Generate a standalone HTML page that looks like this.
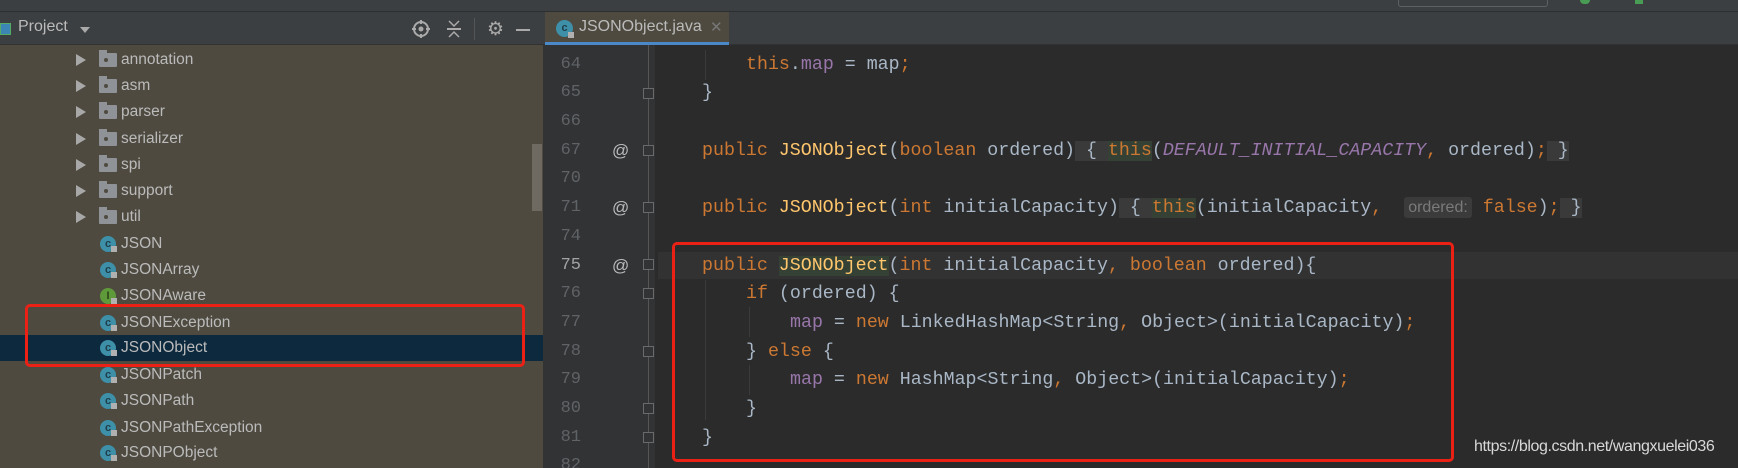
<!DOCTYPE html>
<html style="overflow:hidden"><head><meta charset="utf-8"><style>
*{margin:0;padding:0;box-sizing:border-box}
html,body{overflow:hidden}
body{width:1738px;height:468px;overflow:hidden;background:#2b2b2b;position:relative;font-family:"Liberation Sans",sans-serif}
.a{position:absolute}
.tree{left:0;top:45px;width:543px;height:423px;background:#4e4a40}
.row{position:absolute;left:0;width:543px;height:26px;color:#bbbbbb;font-size:15.5px;line-height:26px}
.row .t{position:absolute;left:121px}
.arr{position:absolute;left:76px;top:7px;width:0;height:0;border-left:10px solid #a8a8a8;border-top:6px solid transparent;border-bottom:6px solid transparent}
.fold{position:absolute;left:99px;top:6px;width:18px;height:14px;background:#8f9296;border-radius:1px}
.fold:before{content:"";position:absolute;left:0;top:-3px;width:8px;height:4px;background:#8f9296}
.fold:after{content:"";position:absolute;left:5px;top:5px;width:4px;height:4px;background:#4e4a40;border-radius:50%}
.ci{position:absolute;left:100px;top:5px;width:16px;height:16px;border-radius:50%;background:#3e8fa8;color:#1e3f4c;font-size:11px;line-height:16px;text-align:center;font-weight:bold}
.ci.i{background:#5e9a3a;color:#2c4419}
.lk{position:absolute;left:111px;top:15px;width:6px;height:6px;background:#b0b0b0}
.code{position:absolute;left:0;font-family:"Liberation Mono",monospace;font-size:18.3px;color:#a9b7c6;white-space:pre;height:28.7px;line-height:28.7px}
.ln{position:absolute;left:543px;width:38px;text-align:right;font-family:"Liberation Mono",monospace;font-size:17px;color:#606366;height:28.7px;line-height:28.7px}
.k{color:#cc7832}.m{color:#ffc66d}.f{color:#9876aa}.c{color:#9876aa;font-style:italic}
.fb{background:#3a3a3a}.g{background:#344134}
.hint{background:#3b3b3b;color:#7a7a7a;font-family:"Liberation Sans",sans-serif;font-size:16px;border-radius:3px;padding:2px 4px}
.at{position:absolute;left:612px;color:#bbbbbb;font-size:17px;height:28.7px;line-height:28.7px}
.fm{position:absolute;left:643px;width:11px;height:11px;border:1px solid #6a6a6a;background:#313335}
</style></head><body>
<div class="a" style="left:0;top:0;width:1738px;height:12px;background:#3c3f41;border-bottom:1px solid #2d2f30"></div>
<div class="a" style="left:1398px;top:-2px;width:150px;height:9px;border:1px solid #5e6163;border-radius:3px"></div>
<div class="a" style="left:1580px;top:0;width:10px;height:4px;background:#499c54;border-radius:0 0 5px 5px"></div>
<div class="a" style="left:1635px;top:0;width:8px;height:4px;background:#499c54"></div>
<div class="a" style="left:0;top:12px;width:543px;height:33px;background:#3c3f41;border-bottom:1px solid #323232"></div>
<div class="a" style="left:0;top:23px;width:11px;height:12px;background:#3b86b5;border:1px solid #5a6"></div>
<div class="a" style="left:18px;top:18px;color:#bbbbbb;font-size:16px">Project</div>
<div class="a" style="left:80px;top:27px;border-top:6px solid #aaa;border-left:5px solid transparent;border-right:5px solid transparent"></div>
<svg class="a" style="left:412px;top:20px" width="18" height="18" viewBox="0 0 18 18"><circle cx="9" cy="9" r="7" fill="none" stroke="#aaa" stroke-width="2"/><circle cx="9" cy="9" r="2.5" fill="#aaa"/><path d="M9 0v4M9 14v4M0 9h4M14 9h4" stroke="#aaa" stroke-width="2"/></svg>
<svg class="a" style="left:446px;top:20px" width="16" height="18" viewBox="0 0 16 18"><path d="M3 1l5 5 5-5M3 17l5-5 5 5" fill="none" stroke="#aaa" stroke-width="1.5"/><path d="M1 9h14" stroke="#aaa" stroke-width="2"/></svg>
<div class="a" style="left:474px;top:18px;width:1px;height:22px;background:#555"></div>
<div class="a" style="left:487px;top:18px;color:#aaa;font-size:19px">⚙</div>
<div class="a" style="left:516px;top:29px;width:14px;height:2px;background:#aaa"></div>
<div class="a" style="left:543px;top:12px;width:1195px;height:33px;background:#3c3f41;border-bottom:1px solid #323232"></div>
<div class="a" style="left:545px;top:12px;width:184px;height:33px;background:#4e4a40"></div>
<div class="a" style="left:545px;top:42px;width:184px;height:3px;background:#4a88c7"></div>
<div class="a" style="left:556px;top:20px;width:17px;height:17px;border-radius:50%;background:#3e8fa8;color:#1e3f4c;font-size:11px;line-height:17px;text-align:center;font-weight:bold">c</div>
<div class="a" style="left:568px;top:32px;width:6px;height:6px;background:#b0b0b0"></div>
<div class="a" style="left:579px;top:18px;color:#bbbbbb;font-size:16px">JSONObject.java</div>
<div class="a" style="left:710px;top:18px;color:#777;font-size:15px">✕</div>
<div class="a tree"></div>
<div class="a" style="left:532px;top:144px;width:10px;height:67px;background:#6e6a62"></div>
<div class="a" style="left:0;top:335px;width:543px;height:26px;background:#0d293e"></div>
<div class="row" style="top:47px"><div class="arr"></div><div class="fold"></div><span class="t">annotation</span></div>
<div class="row" style="top:73px"><div class="arr"></div><div class="fold"></div><span class="t">asm</span></div>
<div class="row" style="top:99px"><div class="arr"></div><div class="fold"></div><span class="t">parser</span></div>
<div class="row" style="top:126px"><div class="arr"></div><div class="fold"></div><span class="t">serializer</span></div>
<div class="row" style="top:152px"><div class="arr"></div><div class="fold"></div><span class="t">spi</span></div>
<div class="row" style="top:178px"><div class="arr"></div><div class="fold"></div><span class="t">support</span></div>
<div class="row" style="top:204px"><div class="arr"></div><div class="fold"></div><span class="t">util</span></div>
<div class="row" style="top:231px"><div class="ci">c</div><div class="lk"></div><span class="t">JSON</span></div>
<div class="row" style="top:257px"><div class="ci">c</div><div class="lk"></div><span class="t">JSONArray</span></div>
<div class="row" style="top:283px"><div class="ci i">I</div><div class="lk"></div><span class="t">JSONAware</span></div>
<div class="row" style="top:310px"><div class="ci">c</div><div class="lk"></div><span class="t">JSONException</span></div>
<div class="row" style="top:335px"><div class="ci">c</div><div class="lk"></div><span class="t">JSONObject</span></div>
<div class="row" style="top:362px"><div class="ci">c</div><div class="lk"></div><span class="t">JSONPatch</span></div>
<div class="row" style="top:388px"><div class="ci">c</div><div class="lk"></div><span class="t">JSONPath</span></div>
<div class="row" style="top:415px"><div class="ci">c</div><div class="lk"></div><span class="t">JSONPathException</span></div>
<div class="row" style="top:440px"><div class="ci">c</div><div class="lk"></div><span class="t">JSONPObject</span></div>
<div class="a" style="left:25px;top:304px;width:500px;height:63px;border:3px solid #ec2116;border-radius:5px"></div>
<div class="a" style="left:543px;top:45px;width:112px;height:423px;background:#313335"></div>
<div class="a" style="left:648px;top:45px;width:1px;height:423px;background:#555"></div>
<div class="a" style="left:658px;top:252px;width:1080px;height:27px;background:#323232"></div>
<div class="a" style="left:705px;top:50px;width:1px;height:30px;background:#3b3b3b"></div>
<div class="a" style="left:705px;top:280px;width:1px;height:140px;background:#3b3b3b"></div>
<div class="a" style="left:749px;top:307px;width:1px;height:30px;background:#3b3b3b"></div>
<div class="a" style="left:749px;top:365px;width:1px;height:30px;background:#3b3b3b"></div>
<div class="ln" style="top:50.6px">64</div>
<div class="ln" style="top:79.3px">65</div>
<div class="ln" style="top:108px">66</div>
<div class="ln" style="top:136.7px">67</div>
<div class="ln" style="top:165.4px">70</div>
<div class="ln" style="top:194.1px">71</div>
<div class="ln" style="top:222.8px">74</div>
<div class="ln" style="top:251.5px;color:#a4a3a3">75</div>
<div class="ln" style="top:280.2px">76</div>
<div class="ln" style="top:308.9px">77</div>
<div class="ln" style="top:337.6px">78</div>
<div class="ln" style="top:366.3px">79</div>
<div class="ln" style="top:395px">80</div>
<div class="ln" style="top:423.7px">81</div>
<div class="ln" style="top:452.4px">82</div>
<div class="at" style="top:136.7px">@</div>
<div class="at" style="top:194.1px">@</div>
<div class="at" style="top:251.5px">@</div>
<div class="fm" style="top:88px"></div>
<div class="fm" style="top:145px"></div>
<div class="fm" style="top:202px"></div>
<div class="fm" style="top:259px"></div>
<div class="fm" style="top:288px"></div>
<div class="fm" style="top:346px"></div>
<div class="fm" style="top:403px"></div>
<div class="fm" style="top:432px"></div>
<div class="code" style="top:50.6px;left:746px"><span class="k">this</span>.<span class="f">map</span> = map<span class="k">;</span></div>
<div class="code" style="top:79.3px;left:702px">}</div>
<div class="code" style="top:136.7px;left:702px"><span class="k">public </span><span class="m">JSONObject</span>(<span class="k">boolean </span>ordered)<span class="fb"> { </span><span class="k g">this</span>(<span class="c">DEFAULT_INITIAL_CAPACITY</span><span class="k">, </span>ordered)<span class="k">;</span><span class="fb"> }</span></div>
<div class="code" style="top:194.1px;left:702px"><span class="k">public </span><span class="m">JSONObject</span>(<span class="k">int </span>initialCapacity)<span class="fb"> { </span><span class="k g">this</span>(initialCapacity<span class="k">, </span> <span class="hint">ordered:</span> <span class="k">false</span>)<span class="k">;</span><span class="fb"> }</span></div>
<div class="code" style="top:251.5px;left:702px"><span class="k">public </span><span class="m g">JSONObject</span>(<span class="k">int </span>initialCapacity<span class="k">, boolean </span>ordered){</div>
<div class="code" style="top:280.2px;left:746px"><span class="k">if </span>(ordered) {</div>
<div class="code" style="top:308.9px;left:790px"><span class="f">map</span> = <span class="k">new </span>LinkedHashMap&lt;String<span class="k">, </span>Object&gt;(initialCapacity)<span class="k">;</span></div>
<div class="code" style="top:337.6px;left:746px">} <span class="k">else </span>{</div>
<div class="code" style="top:366.3px;left:790px"><span class="f">map</span> = <span class="k">new </span>HashMap&lt;String<span class="k">, </span>Object&gt;(initialCapacity)<span class="k">;</span></div>
<div class="code" style="top:395px;left:746px">}</div>
<div class="code" style="top:423.7px;left:702px">}</div>
<div class="a" style="left:672px;top:242px;width:782px;height:220px;border:3px solid #ec2116;border-radius:5px"></div>
<div class="a" style="left:1474px;top:438px;color:#d8d8d8;font-size:16px;letter-spacing:-0.4px;white-space:nowrap">https://blog.csdn.net/wangxuelei036</div>
</body></html>
